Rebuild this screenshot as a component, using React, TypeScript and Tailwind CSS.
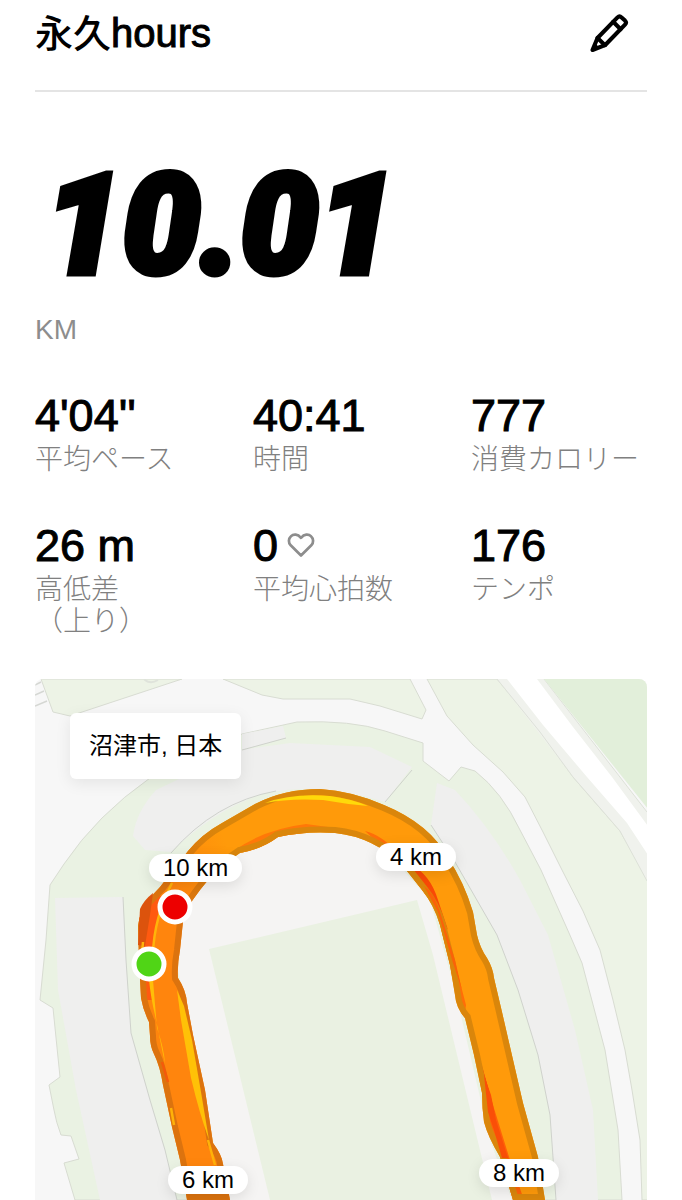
import React from "react";

type Stat = { value: string; label: string; note?: string; heart?: boolean };

const stats: Stat[] = [
  { value: "4'04''", label: "平均ペース" },
  { value: "40:41", label: "時間" },
  { value: "777", label: "消費カロリー" },
  { value: "26 m", label: "高低差", note: "（上り）" },
  { value: "0", label: "平均心拍数", heart: true },
  { value: "176", label: "テンポ" },
];

const pins = [
  { label: "10 km", place: "left-[114px] top-[175px]" },
  { label: "4 km", place: "left-[341px] top-[164px]" },
  { label: "6 km", place: "left-[133px] top-[487px]" },
  { label: "8 km", place: "left-[444px] top-[480px]" },
];

function PencilIcon() {
  return (
    <svg viewBox="0 0 40 40" className="size-10" fill="none" stroke="#000" strokeWidth="4.1" strokeLinejoin="round" strokeLinecap="round" aria-hidden="true">
      <path d="M3.5 37 8.5 25 28.5 4.4Q30.5 2.5 32.6 4.4L36 7.6Q38 9.6 36 11.7L16 32.2Z" />
      <path d="M24.2 8.8 31.6 16.2M8.5 25 16 32.2" />
      <path d="M3.5 37 6 31.6 9.6 34.6Z" fill="#000" strokeWidth="1.5" />
    </svg>
  );
}

function HeartIcon() {
  return (
    <svg viewBox="0 0 28 26" className="h-[26px] w-7" fill="none" stroke="#8d8d8d" strokeWidth="2.7" strokeLinejoin="round" aria-hidden="true">
      <path d="M14 23.5 3.7 13.3C1.2 10.6 1.4 6.6 3.8 4.4 6.6 1.7 10.7 2 14 5.8 17.3 2 21.4 1.7 24.2 4.4 26.6 6.6 26.8 10.6 24.3 13.3Z" />
    </svg>
  );
}

const track =
  "M187 1200 180 1160 172 1127 163 1085 Q160 1066 154 1054 150 1046 150 1036L149 1022Q143 1010 141 998L139 960 138 926Q140 912 146 902L160 887 188 851Q202 834 222 823L255 804Q284 789 320 789 352 791 384 805 430 824 448 858 464 882 473 912L477 935Q480 948 487 958 493 968 494 978L502 1012 523 1103 538 1157 545 1200H513L500 1157Q488 1137 484 1122 482 1108 482 1093L474 1055 465 1018Q456 1008 455 995L450 965 440 925Q434 905 422 890L403 866Q374 837 335 833 305 831 278 837 262 849 240 853 216 868 200 890L184 912 180 950Q177 966 178 978 186 990 187 1003L193 1035 205 1090 213 1143Q222 1155 223 1164L230 1200Z";

function RouteMap() {
  return (
    <svg viewBox="35 679 612 521" preserveAspectRatio="xMinYMin slice" className="block h-[521px] w-full" aria-hidden="true">
      <defs>
        <clipPath id="trackClip"><path d={track} /></clipPath>
        <linearGradient id="trackFill" gradientUnits="userSpaceOnUse" x1="210" y1="960" x2="270" y2="930">
          <stop offset="0" stopColor="#ff850d" />
          <stop offset="1" stopColor="#ff9a0a" />
        </linearGradient>
        <linearGradient id="trackEdge" gradientUnits="userSpaceOnUse" x1="210" y1="960" x2="270" y2="930">
          <stop offset="0" stopColor="#dc730e" />
          <stop offset="1" stopColor="#da860b" />
        </linearGradient>
      </defs>
      <rect x="35" y="679" width="612" height="521" fill="#f7f7f7" />

      <g stroke="#d8dcd2" strokeWidth="1">
        <path d="M41 679 53 712 70 716 182 679Z" fill="#edf3e6" />
        <path d="M223 679 262 695 283 699 350 699 380 706 422 719 426 710 410 679Z" fill="#edf3e6" />
        <path d="M427 679 447 716 473 745 503 772 525 797 543 832 562 870 583 911 600 950 613 1000 625 1050 632 1090 640 1140 642 1200H648V881L620 831 573 777 540 732 497 679Z" fill="#edf3e6" />
        <path d="M297 722Q352 720 385 731L423 743V761L449 781 461 767 475 771Q502 792 520 830L541 870 569 933 582 963 605 1050 618 1130 622 1200H75L64 1163 79 1159 71 1136 61 1135Q56 1122 54 1110L49 1085 60 1077 53 1008 40 1000 46 940 50 885 64 864Q97 815 150 778L242 734Z" fill="#eaf2e3" />
      </g>
      <path d="M35 685 41 682M35 695 44 691M35 706 47 701" stroke="#d5d7d3" strokeWidth="1.5" />
      <path d="M144 679Q150 685 158 680" fill="none" stroke="#dfe3db" strokeWidth="2" />

      <path d="M497 679H544L647 812V881L620 831 573 777Z" fill="#f0f2ed" />
      <path d="M497 679 540 732 573 777 620 831 647 881M544 679 647 812" fill="none" stroke="#dde1d8" strokeWidth="1" />
      <path d="M507 679H537L573 727 612 777 648 826V855L627 823 587 777 543 725Z" fill="#fff" />
      <path d="M544 679H648V809Z" fill="#e2efda" />

      <g fill="#efefee">
        <path d="M55 898 123 897 126 960 131 1033 150 1100 165 1150 177 1200H100L76 1090 58 990Z" />
        <path d="M133 836Q136 812 156 790L240 750 290 743 370 747 412 767 385 802Q325 783 270 792 220 805 171 852L145 850Z" />
        <path d="M437 783 455 790Q491 828 520 880L548 935 575 1030 593 1110 598 1200H556L550 1115 538 1055 518 990 497 935 455 862 431 825Z" />
        <path d="M242 734 283 726 286 738 242 750Z" />
      </g>
      <g fill="none" stroke="#cfd2cc" strokeWidth="1">
        <path d="M123 897 126 960 131 1033 150 1100 165 1150 177 1200" />
        <path d="M171 853Q215 802 276 791M385 802 412 770M242 750 286 738" />
        <path d="M431 825 455 862 497 935 518 990 538 1055 550 1115 556 1200" />
      </g>

      <path d="M225 1200 195 1050 178 970 182 905 240 850 310 825 375 838 430 900 455 990 490 1140 512 1200Z" fill="#f5f4f3" />
      <path d="M209 949 417 900 433 955 492 1200H270Z" fill="#eaf1e2" />

      <path d={track} fill="url(#trackFill)" />
      <g clipPath="url(#trackClip)">
        <path d="M138 910 150 897 163 896 157 925 150 963 153 1000 142 1000Z" fill="#ff5a10" />
        <path d="M235 850Q265 829 306 824L328 827 300 834 250 856Z" fill="#ff7808" />
        <path d="M365 831Q382 835 400 855L432 889Q443 918 455 963L466 1005 464 1022 449 965 436 909 405 868Z" fill="#ff6e08" />
        <path d="M411 865Q430 874 438 900L448 930 433 904Z" fill="#f94906" />
        <path d="M458 985 468 1025 480 1060 493 1105 510 1160 524 1200H512L498 1150 485 1110 478 1070Z" fill="#ff6208" />
        <path d="M482 1066 491 1098 494 1122 487 1110Z" fill="#f84208" />
      </g>
      <path d={track} clipPath="url(#trackClip)" fill="none" stroke="url(#trackEdge)" strokeWidth="12" />
      <path d="M140 909Q144 900 153 893L150 915 145 946 138 945Z" fill="#dc530d" />
      <path d="M424 886Q434 893 440 912L455 960 462 990 453 963 438 912Z" fill="#fb6208" />
      <path d="M484 1075 491 1095 496 1120 508 1158H502L494 1130 488 1112Z" fill="#fa4f08" />
      <path d="M265 803Q292 793 330 796 352 799 368 806 345 804 323 800 290 798 265 803Z" fill="#ffd90a" />
      <path d="M172 883Q154 918 153 954M143 942 142 953" fill="none" stroke="#ffb40a" strokeWidth="2.5" />
      <path d="M149 980Q151 999 155 1015L165 1064Q164 1048 157 1028L153 980Z" fill="#ffbe08" />
      <path d="M177 990 184 1006 192 1040 201 1092 209 1140Q199 1112 191 1078L181 1020Z" fill="#ffc107" />
      <path d="M171 1108 174 1125M208 1140 215 1165" fill="none" stroke="#ffb208" strokeWidth="2.5" />
      <path d="M162 1062 168 1082" stroke="#f45a0b" strokeWidth="2.5" />

      <g stroke="#fff" strokeWidth="5">
        <circle cx="175" cy="907" r="15" fill="#ed0000" />
        <circle cx="149" cy="964" r="15" fill="#50d516" />
      </g>
    </svg>
  );
}

export default function App() {
  return (
    <main className="bg-white px-[35px] font-['Liberation_Sans','Noto_Sans_CJK_JP',sans-serif] text-black">
      <header className="flex h-[92px] items-start justify-between border-b-2 border-[#e4e4e4] pt-[10px]">
        <h1 className="text-[38px] leading-[46px] font-medium">
          永久<span className="text-[40px] font-normal [-webkit-text-stroke:1px_#000]">hours</span>
        </h1>
        <button type="button" aria-label="編集" className="mr-[18px] pt-[3px]">
          <PencilIcon />
        </button>
      </header>

      <section className="pt-[62px]">
        <p className="pl-[10px] font-['Roboto','Liberation_Sans',sans-serif] text-[138px] leading-[144px] font-black italic [-webkit-text-stroke:7px_#000]">10.01</p>
        <p className="mt-4 text-[28px] leading-8 text-[#8d8d8d]">KM</p>
      </section>

      <dl className="mt-[46px] grid grid-cols-[218px_218px_1fr] gap-y-[46px]">
        {stats.map((s) => (
          <div key={s.label} className="flex flex-col-reverse justify-end">
            <dt className="text-[28px] leading-8 font-light whitespace-nowrap text-[#808080]">
              {s.label}
              {s.note && <span className="block">{s.note}</span>}
            </dt>
            <dd className="flex h-[52px] items-start gap-[9px] text-[45px] leading-[48px] whitespace-nowrap [-webkit-text-stroke:1px_#000]">
              {s.value}
              {s.heart && <span className="flex h-[46px] items-center"><HeartIcon /></span>}
            </dd>
          </div>
        ))}
      </dl>

      <section className="relative mt-[41px] overflow-hidden rounded-t-lg" aria-label="ルート">
        <RouteMap />
        <p className="absolute top-[34px] left-[35px] rounded-md bg-white px-[19px] text-2xl leading-[66px] shadow-[0_4px_16px_rgba(0,0,0,0.08)]">
          沼津市, 日本
        </p>
        {pins.map((p) => (
          <span key={p.label} className={`absolute rounded-full bg-white px-[14px] text-2xl leading-7 shadow-[0_4px_14px_rgba(0,0,0,0.1)] ${p.place}`}>
            {p.label}
          </span>
        ))}
      </section>
    </main>
  );
}
